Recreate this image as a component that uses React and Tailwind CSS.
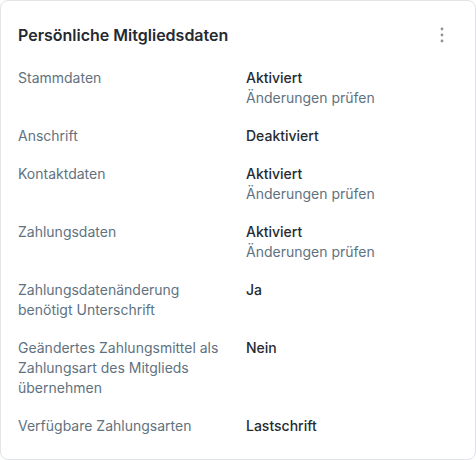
const rows = [
  { label: "Stammdaten", value: "Aktiviert", link: "Änderungen prüfen" },
  { label: "Anschrift", value: "Deaktiviert" },
  { label: "Kontaktdaten", value: "Aktiviert", link: "Änderungen prüfen" },
  { label: "Zahlungsdaten", value: "Aktiviert", link: "Änderungen prüfen" },
  { label: "Zahlungsdatenänderung benötigt Unterschrift", value: "Ja" },
  { label: "Geändertes Zahlungsmittel als Zahlungsart des Mitglieds übernehmen", value: "Nein" },
  { label: "Verfügbare Zahlungsarten", value: "Lastschrift" },
];

function KebabIcon() {
  return (
    <svg width="16" height="16" viewBox="0 0 16 16" fill="#8d939b">
      <circle cx="8" cy="2" r="1.4" />
      <circle cx="8" cy="8" r="1.4" />
      <circle cx="8" cy="14" r="1.4" />
    </svg>
  );
}

export default function App() {
  return (
    <div className="h-[460px] w-[476px] bg-white font-['Inter',sans-serif]">
      <section className="h-full w-full rounded-lg border border-[#e2e4e8] bg-white px-[17px] pt-[22px]">
        <header className="flex items-center justify-between">
          <h2 className="text-base leading-6 font-semibold text-[#252a31]">Persönliche Mitgliedsdaten</h2>
          <button className="mr-[4px] flex h-6 w-6 items-center justify-center">
            <KebabIcon />
          </button>
        </header>

        <dl className="mt-[21px] flex flex-col gap-[18px]">
          {rows.map((row) => (
            <div key={row.label} className="grid grid-cols-2 gap-4 text-sm leading-5">
              <dt className="text-[#5f7280]">{row.label}</dt>
              <dd>
                <div className="font-medium text-[#262b32]">{row.value}</div>
                {row.link && <a className="block text-[#5f7280]">{row.link}</a>}
              </dd>
            </div>
          ))}
        </dl>
      </section>
    </div>
  );
}
